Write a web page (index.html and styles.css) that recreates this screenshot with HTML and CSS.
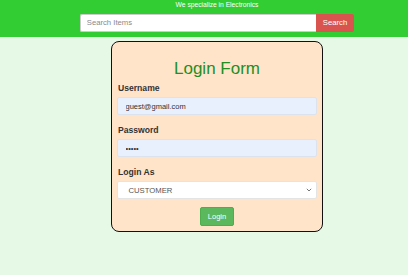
FILE: index.html
```html
<!DOCTYPE html>
<html>
<head>
<meta charset="utf-8">
<link rel="stylesheet" href="styles.css">
</head>
<body>
<header class="top">
  <div class="top-inner">
    <p class="tagline">We specialize in Electronics</p>
    <form class="search">
      <input class="search-input" type="text" placeholder="Search Items">
      <button class="search-btn" type="button">Search</button>
    </form>
  </div>
</header>
<main class="main">
  <div class="card">
    <h2 class="title">Login Form</h2>
    <div class="group">
      <label class="lbl">Username</label>
      <input class="field filled" type="text" value="guest@gmail.com">
    </div>
    <div class="group">
      <label class="lbl">Password</label>
      <input class="field filled" type="password" value="guest">
    </div>
    <div class="group group-last">
      <label class="lbl">Login As</label>
      <div class="select">
        <span class="select-text">CUSTOMER</span>
        <svg class="chev" width="6" height="4" viewBox="0 0 6 4"><path d="M0.8 0.8 L3 3 L5.2 0.8" fill="none" stroke="#666" stroke-width="0.9"/></svg>
      </div>
    </div>
    <div class="actions">
      <button class="login-btn" type="button">Login</button>
    </div>
  </div>
</main>
</body>
</html>
```
FILE: styles.css
```css
* { box-sizing: border-box; }
html, body { margin: 0; padding: 0; }
body {
  background: #e6f9e6;
  font-family: "Liberation Sans", Arial, sans-serif;
  height: 275px;
  overflow: hidden;
}
.top {
  background: #32cd32;
  padding: 0 0 5px 26px;
}
.top-inner {
  display: flex;
  flex-direction: column;
  align-items: center;
}
.tagline {
  margin: 0;
  color: #fff;
  font-size: 6.7px;
  line-height: 9px;
}
.search {
  display: flex;
  margin-top: 4.5px;
  height: 18.5px;
}
.search-input {
  width: 236px;
  height: 100%;
  border: 1px solid #ccc;
  border-right: none;
  border-radius: 2px 0 0 2px;
  background: #fff;
  padding: 0 6px;
  font-family: "Liberation Sans", Arial, sans-serif;
  font-size: 7.7px;
  outline: none;
}
.search-input::placeholder { color: #8a8a8a; }
.search-btn {
  width: 38.5px;
  height: 100%;
  border: none;
  border-radius: 0 2px 2px 0;
  background: #d9534f;
  color: #fff;
  font-family: "Liberation Sans", Arial, sans-serif;
  font-size: 7.7px;
  padding: 0;
}
.main {
  padding: 4px 0 0 26px;
  display: flex;
  justify-content: center;
}
.card {
  width: 212px;
  background: #ffe4c9;
  border: 1.5px solid #111;
  border-radius: 8px;
  padding: 0 5px 5px 5px;
}
.title {
  margin: 16.8px 0 5.2px;
  text-align: center;
  color: #238e23;
  font-weight: normal;
  font-size: 17px;
  line-height: 19.5px;
}
.group { margin-bottom: 10px; }
.group-last { margin-bottom: 8px; }
.lbl {
  display: block;
  font-size: 8.6px;
  font-weight: bold;
  line-height: 10px;
  color: #333;
  margin-bottom: 4px;
  padding-left: 1px;
}
.field {
  display: block;
  width: 100%;
  height: 18px;
  border: 1px solid #dde3ec;
  border-radius: 2px;
  padding: 0 7.5px;
  font-family: "Liberation Sans", Arial, sans-serif;
  font-size: 7.5px;
  color: #333;
  outline: none;
}
.filled { background: #e8f0fe; }
.select {
  display: flex;
  align-items: center;
  justify-content: space-between;
  height: 18px;
  background: #fff;
  border: 1px solid #e4e4e4;
  border-radius: 2px;
  padding: 0 4px 0 10.5px;
}
.select-text {
  font-size: 7.7px;
  color: #555;
}
.chev { display: block; }
.actions {
  display: flex;
  justify-content: center;
}
.login-btn {
  width: 34px;
  height: 19px;
  background: #5cb85c;
  border: 1px solid #4cae4c;
  border-radius: 2px;
  color: #fff;
  font-family: "Liberation Sans", Arial, sans-serif;
  font-size: 7.5px;
  padding: 0;
}
```
